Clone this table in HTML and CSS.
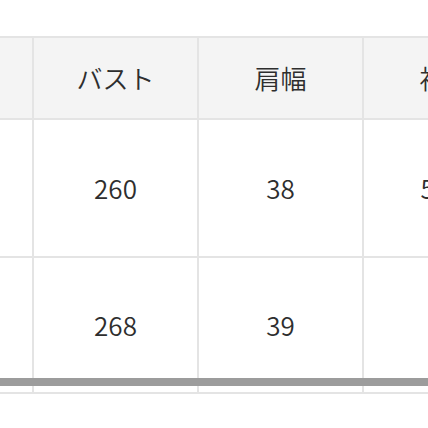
FILE: index.html
```html
<!DOCTYPE html>
<html lang="ja">
<head>
<meta charset="utf-8">
<link rel="stylesheet" href="styles.css">
</head>
<body>
<div class="scroller">
  <table class="size-table">
    <colgroup>
      <col class="c-first"><col class="c"><col class="c"><col class="c">
    </colgroup>
    <thead>
      <tr><th></th><th>バスト</th><th>肩幅</th><th>袖丈</th></tr>
    </thead>
    <tbody>
      <tr class="r1"><td></td><td>260</td><td>38</td><td>58.5</td></tr>
      <tr class="r2"><td></td><td>268</td><td>39</td><td>60</td></tr>
    </tbody>
  </table>
  <div class="scrollbar"></div>
</div>
</body>
</html>
```
FILE: styles.css
```css
html, body {
  margin: 0;
  padding: 0;
  background: #ffffff;
}
body {
  font-family: "Noto Sans CJK JP", "Noto Sans", sans-serif;
  color: #2e2e2e;
}
.scroller {
  position: relative;
  margin-top: 36px;
  width: 428px;
  overflow: hidden;
}
.size-table {
  border-collapse: collapse;
  table-layout: fixed;
  width: 529px;
  margin-left: -2px;
}
.c-first { width: 34px; }
.c { width: 165px; }
.size-table th,
.size-table td {
  border: 2px solid #e4e4e4;
  padding: 0;
  text-align: center;
  vertical-align: middle;
  font-size: 26px;
  font-weight: 350;
  line-height: 1;
  white-space: nowrap;
}
.size-table th {
  background: #f4f4f4;
  height: 80px;
}
.size-table .r1 td { height: 136px; }
.size-table .r2 td { height: 134px; }
.scrollbar {
  position: absolute;
  left: 0;
  right: 0;
  top: 342px;
  height: 8px;
  background: #9c9c9c;
}
```
